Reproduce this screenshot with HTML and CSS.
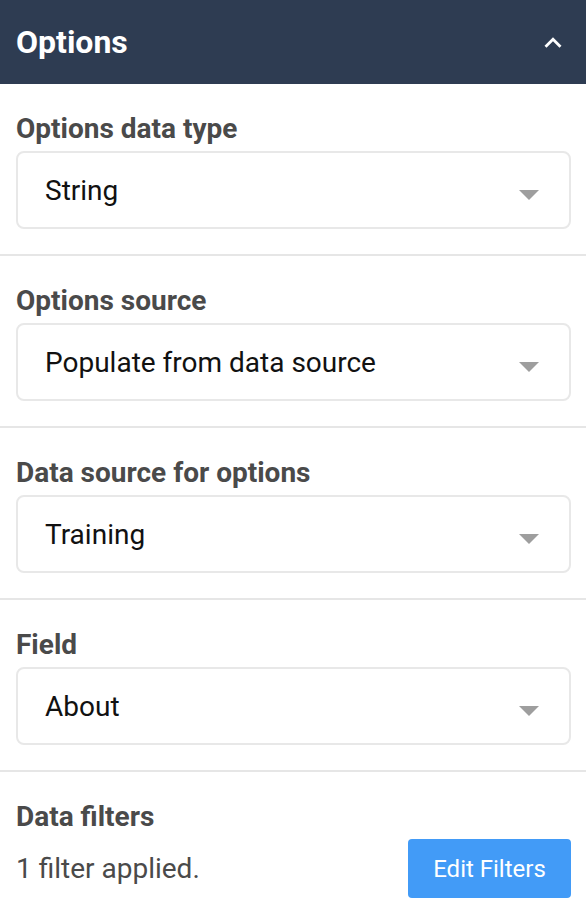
FILE: index.html
```html
<!DOCTYPE html>
<html lang="en">
<head>
  <meta charset="UTF-8" />
  <title>Options</title>
  <link rel="stylesheet" href="styles.css">
</head>
<body>
  <div class="panel">
    <div class="panel-header">
      <div class="panel-title">Options</div>
      <svg class="collapse" width="34" height="34" viewBox="0 0 24 24">
        <path d="M12 8l-6 6 1.41 1.41L12 10.83l4.59 4.58L18 14z" fill="#fff"/>
      </svg>
    </div>

    <div class="section">
      <div class="label">Options data type</div>
      <div class="select">
        <span>String</span>
        <span class="caret"></span>
      </div>
    </div>

    <div class="section">
      <div class="label">Options source</div>
      <div class="select">
        <span>Populate from data source</span>
        <span class="caret"></span>
      </div>
    </div>

    <div class="section">
      <div class="label">Data source for options</div>
      <div class="select">
        <span>Training</span>
        <span class="caret"></span>
      </div>
    </div>

    <div class="section">
      <div class="label">Field</div>
      <div class="select">
        <span>About</span>
        <span class="caret"></span>
      </div>
    </div>

    <div class="section last">
      <div class="label">Data filters</div>
      <div class="filters">
        <span class="filter-count">1 filter applied.</span>
        <button class="btn">Edit Filters</button>
      </div>
    </div>
  </div>
</body>
</html>
```

FILE: styles.css
```css
body {
  font-family: Roboto, 'Liberation Sans', sans-serif;
  margin: 0;
  padding: 0;
  background: #fff;
}
.panel {
  width: 586px;
}
.panel-header {
  height: 84px;
  background-color: #2e3c52;
  display: flex;
  align-items: center;
  justify-content: space-between;
  padding: 0 16px;
  box-sizing: border-box;
}
.panel-title {
  color: #fff;
  font-size: 32px;
  font-weight: bold;
}
.collapse {
  margin-top: 2px;
}
.section {
  padding: 31px 15px 25px 16px;
  border-bottom: 2px solid #e6e6e6;
}
.section.last {
  border-bottom: none;
}
.label {
  font-size: 28px;
  line-height: 28px;
  font-weight: bold;
  color: #4a4a4a;
  margin-bottom: 8px;
}
.select {
  height: 78px;
  box-sizing: border-box;
  border: 2px solid #e8e8e8;
  border-radius: 8px;
  display: flex;
  align-items: center;
  justify-content: space-between;
  padding: 0 30px 0 27px;
  font-size: 28px;
  color: #111;
}
.caret {
  width: 0;
  height: 0;
  border-left: 10px solid transparent;
  border-right: 10px solid transparent;
  border-top: 10px solid #9e9e9e;
  margin-top: 10px;
}
.filters {
  display: flex;
  align-items: center;
  justify-content: space-between;
}
.filter-count {
  font-size: 28px;
  color: #4a4a4a;
}
.btn {
  width: 163px;
  height: 59px;
  border: none;
  border-radius: 4px;
  background-color: #429bf7;
  color: #fff;
  font-family: Roboto, 'Liberation Sans', sans-serif;
  font-size: 24px;
  cursor: pointer;
}
```
